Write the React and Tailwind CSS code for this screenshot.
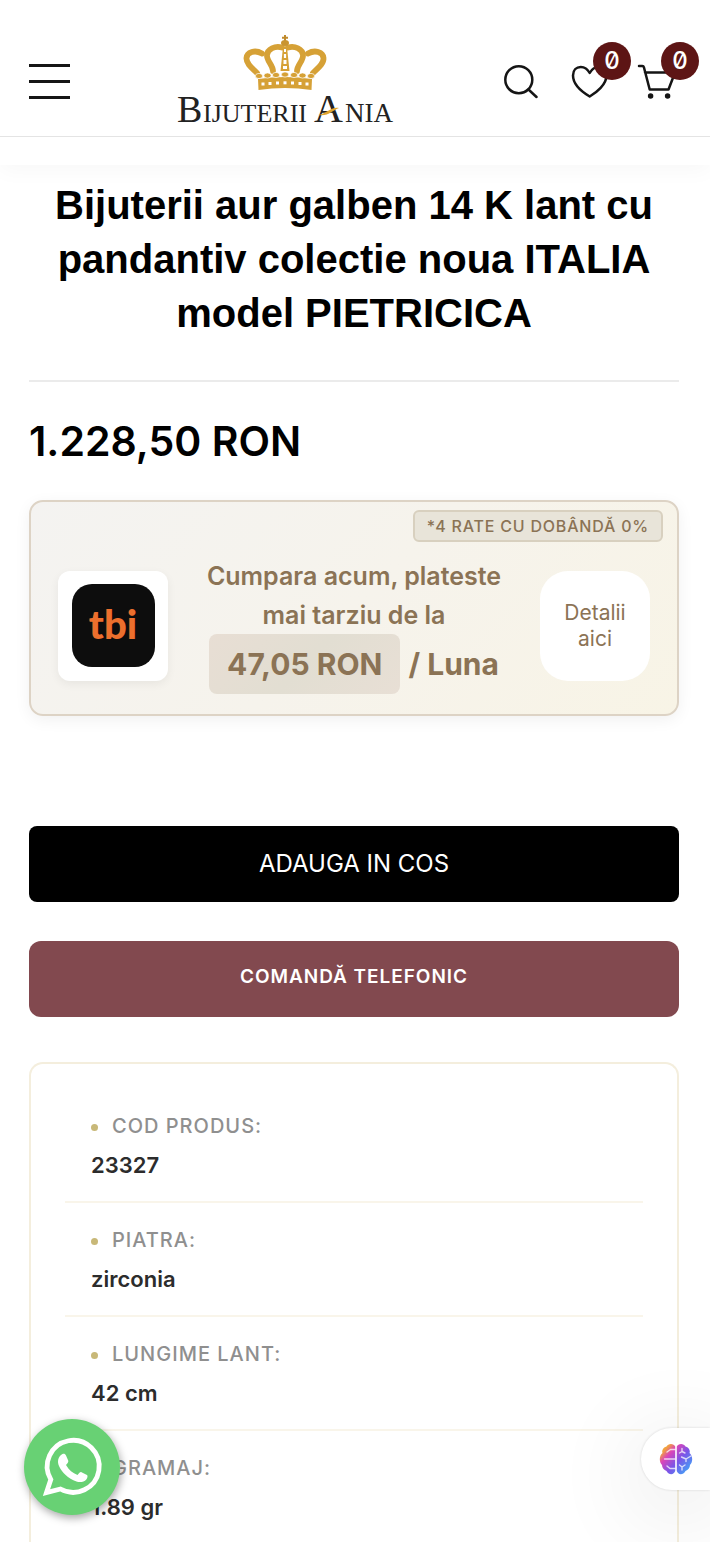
const details = [
  { label: "COD PRODUS:", value: "23327" },
  { label: "PIATRA:", value: "zirconia" },
  { label: "LUNGIME LANT:", value: "42 cm" },
  { label: "GRAMAJ:", value: "1.89 gr" },
]

export default function App() {
  return (
    <div className="flex min-h-screen flex-col bg-white font-['Inter',sans-serif] text-black">
      <Header />

      <main className="flex flex-1 flex-col pt-[13px] pr-[31px] pl-[29px]">
        <h1 className="text-center font-['Liberation_Sans',Arial,sans-serif] text-[40px] leading-[54px] font-bold">
          Bijuterii aur galben 14 K lant cu pandantiv colectie noua ITALIA model PIETRICICA
        </h1>
        <hr className="mt-10 border-t-2 border-[#ebebeb]" />
        <p className="mt-8 text-[41px] leading-[54px] font-semibold">1.228,50 RON</p>

        <Installments />

        <button
          type="button"
          className="mt-[110px] h-[76px] w-full rounded-lg bg-black text-2xl text-white"
        >
          ADAUGA IN COS
        </button>
        <button
          type="button"
          className="mt-[39px] h-[76px] w-full rounded-xl bg-[#82494f] pb-1 text-[19px] font-semibold tracking-wider text-white"
        >
          COMANDĂ TELEFONIC
        </button>

        {/* Product details */}
        <section className="mt-[45px] flex-1 rounded-t-[14px] border-2 border-b-0 border-[#f4eedd] px-[34px] pt-[25px]">
          <dl>
            {details.map((item) => (
              <DetailRow key={item.label} label={item.label} value={item.value} />
            ))}
          </dl>
        </section>
      </main>

      {/* Floating buttons */}
      <a
        href="#whatsapp"
        aria-label="WhatsApp"
        className="fixed bottom-[27px] left-6 flex size-24 items-center justify-center rounded-full bg-[#68d174] shadow-[1px_3px_8px_rgba(0,0,0,0.35)]"
      >
        <WhatsAppIcon />
      </a>
      <button
        type="button"
        aria-label="Asistent"
        className="fixed right-0 bottom-[52px] flex h-[62px] w-[69px] items-center rounded-l-full bg-white pl-[18px] shadow-[0_0_3px_rgba(0,0,0,0.15),0_16px_90px_10px_rgba(0,0,0,0.09)]"
      >
        <BrainIcon />
      </button>
    </div>
  )
}

// --- Components ---

function Header() {
  return (
    <header className="pb-7 shadow-[0_6px_20px_rgba(0,0,0,0.03)]">
      <div className="flex h-[137px] items-center justify-between border-b border-[#e4e4e4] pt-[27px] pr-9 pl-[29px]">
        <button type="button" aria-label="Meniu" className="flex flex-col gap-[13px]">
          <span className="h-[3px] w-[41px] bg-[#151515]" />
          <span className="h-[3px] w-[41px] bg-[#151515]" />
          <span className="h-[3px] w-[41px] bg-[#151515]" />
        </button>
        <a href="#home" aria-label="Bijuterii Ania">
          <Logo />
        </a>
        <nav className="flex gap-8">
          <a href="#cauta" aria-label="Cauta">
            <svg className="size-9" viewBox="0 0 36 36" fill="none" stroke="#151515" strokeWidth="2.5" strokeLinecap="round">
              <circle cx="16.800" cy="15.700" r="13.500" />
              <path d="M26.500 25.500l8 7.500" />
            </svg>
          </a>
          <a href="#favorite" aria-label="Favorite" className="relative">
            <svg className="size-9 overflow-visible" viewBox="0 0 36 36" fill="none" stroke="#151515" strokeWidth="2.5" strokeLinejoin="round">
              <path d="M19.700 32.500C13 28.500 3 20.500 3 11.500C3 6 6.500 3 10.800 3C15 3 17.500 5 19.700 9C21.900 5 24.500 3 28.600 3C33 3 36.500 6 36.500 11.500C36.500 20.500 26.500 28.500 19.700 32.500Z" />
            </svg>
            <CountBadge count={0} />
          </a>
          <a href="#cos" aria-label="Cos" className="relative">
            <svg className="size-9 overflow-visible" viewBox="0 0 36 36" fill="none" stroke="#151515" strokeWidth="2.5" strokeLinecap="round" strokeLinejoin="round">
              <path d="M1 2h3.300c1 0 1.400.500 1.600 1.300L11.700 25.500H30.500L37 8.500H7" />
              <circle cx="12.600" cy="32" r="1.500" fill="#151515" />
              <circle cx="29.600" cy="32" r="1.500" fill="#151515" />
            </svg>
            <CountBadge count={0} />
          </a>
        </nav>
      </div>
    </header>
  )
}

function CountBadge({ count }) {
  return (
    <span className="absolute -top-[22px] left-[23px] flex size-[38px] items-center justify-center rounded-full bg-[#5d1515] text-2xl leading-none font-medium text-white slashed-zero">
      {count}
    </span>
  )
}

function Installments() {
  return (
    <section className="relative mt-8 flex items-center justify-between rounded-[14px] border-2 border-[#ddd3c5] bg-linear-135 from-[#f4f3f1] via-[#f6f3ec] to-[#f8f4e6] px-[27px] pt-[55px] pb-5 text-[#8b7355] shadow-[0_4px_16px_rgba(0,0,0,0.06)]">
      <span className="absolute top-2 right-[14px] flex h-8 items-center rounded-md border-2 border-[#d8d0bf] bg-[#e8e4d9] px-3 text-[16px] font-medium tracking-wider">
        *4 RATE CU DOBÂNDĂ 0%
      </span>
      <div className="flex size-[110px] shrink-0 items-center justify-center rounded-xl bg-white shadow-[0_3px_10px_rgba(0,0,0,0.06)]">
        <svg className="size-[83px]" viewBox="0 0 83 83" role="img" aria-label="tbi">
          <rect width="83" height="83" rx="20" fill="#0d0d0d" />
          <text x="41" y="55" textAnchor="middle" fill="#ec6f2d" fontFamily="Lato, sans-serif" fontWeight="900" fontSize="40">
            tbi
          </text>
        </svg>
      </div>
      <div className="px-4 text-center">
        <p className="mx-auto max-w-[320px] text-[25px] leading-[39px] font-semibold">
          Cumpara acum, plateste mai tarziu de la
        </p>
        <p className="-mt-px flex items-center justify-center gap-2 text-[30px] leading-[60px] font-bold">
          <span className="rounded-lg bg-linear-135 from-[#e8ded4] via-[#e2ded2] to-[#e8dfd5] px-[18px]">47,05 RON</span>
          <span>/ Luna</span>
        </p>
      </div>
      <button
        type="button"
        className="size-[110px] shrink-0 rounded-[28px] bg-white px-5 text-[21px] leading-[26px]"
      >
        Detalii aici
      </button>
    </section>
  )
}

function DetailRow({ label, value }) {
  return (
    <div className="border-b-2 border-[#f9f5ea] px-[26px] pt-6 pb-5 last:border-b-0">
      <dt className="flex items-center gap-[14px] text-xl leading-[26px] font-medium tracking-wider text-[#8f8f8f]">
        <span className="mt-0.5 size-[7px] rounded-full bg-[#c8b878]" />
        {label}
      </dt>
      <dd className="mt-[10px] text-[22px] leading-8 font-semibold text-[#2c2c2c]">{value}</dd>
    </div>
  )
}

function Logo() {
  return (
    <svg className="h-[100px] w-[218px]" viewBox="0 -3 218 100" role="img" aria-label="Bijuterii Ania">
      {/* Crown */}
      <g transform="translate(108)">
        <g fill="none" stroke="#d6a136" strokeWidth="5.800" strokeLinecap="round">
          <path d="M-28 38C-32 34 -39 29 -38.500 23C-38 17 -30 14.500 -23 18.500" />
          <path d="M28 38C32 34 39 29 38.500 23C38 17 30 14.500 23 18.500" />
          <path d="M-12 36C-12 30 -18.500 26 -18 20C-17.500 14 -10 10.500 -3 12.500" />
          <path d="M12 36C12 30 18.500 26 18 20C17.500 14 10 10.500 3 12.500" />
        </g>
        <path d="M-2 12h4L4.500 36h-9z" fill="#d6a136" />
        <path d="M0 0v7M-3 2.800h6" stroke="#c08a2c" strokeWidth="2" />
        <ellipse cy="8" rx="4" ry="3" fill="#c9942f" />
        <g fill="#fff">
          <rect x="-1" y="14" width="2" height="3" />
          <rect x="-1.100" y="19" width="2.200" height="4" />
          <rect x="-1.500" y="25" width="3" height="4" />
          <rect x="-2" y="31" width="4" height="3" />
        </g>
        <path d="M-27 44Q0 40 27 44L26.500 55Q0 51 -26.500 55Z" fill="#d6a136" />
        <g fill="#d6a136" stroke="#fff" strokeWidth=".7">
          <ellipse cx="-26" cy="41" rx="3.600" ry="2.600" />
          <ellipse cx="-17.500" cy="40.500" rx="3.600" ry="2.600" />
          <ellipse cx="-9" cy="40" rx="3.600" ry="2.600" />
          <ellipse cx="0" cy="39.500" rx="3.600" ry="2.600" />
          <ellipse cx="9" cy="40" rx="3.600" ry="2.600" />
          <ellipse cx="17.500" cy="40.500" rx="3.600" ry="2.600" />
          <ellipse cx="26" cy="41" rx="3.600" ry="2.600" />
        </g>
        <g fill="#fff">
          <rect x="-23.500" y="47.500" width="3" height="3" />
          <rect x="-16.500" y="47" width="3" height="3" />
          <rect x="-9" y="46.500" width="3" height="3" />
          <rect x="-1.500" y="46.300" width="3" height="3" />
          <rect x="6" y="46.500" width="3" height="3" />
          <rect x="13.500" y="47" width="3" height="3" />
          <rect x="20.500" y="47.500" width="3" height="3" />
        </g>
      </g>
      <g fill="#222" fontFamily="'Liberation Serif', serif">
        <text x="0" y="87" fontSize="38">B</text>
        <text x="26" y="87" fontSize="26">IJUTERII</text>
        <text x="137" y="87" fontSize="40">A</text>
        <text x="168" y="87" fontSize="27">NIA</text>
      </g>
      <path d="M141 80C149 79 155 71 162 73C156 75 151 82 141 80Z" fill="#e0a42e" />
    </svg>
  )
}

function WhatsAppIcon() {
  return (
    <svg className="size-[58px] overflow-visible" viewBox="0 0 58 58" fill="none">
      <path
        d="M3.500 54.500L7.800 41.500A26 26 0 1 1 17.500 51Z"
        stroke="#fff"
        strokeWidth="4.800"
      />
      <path
        d="M19.500 16C21 15.500 22.300 15.800 23 17.500L25.200 22.500C25.600 23.500 25.200 24.500 23 27C26 32 29.500 35 34.500 37C36.500 34.500 37.300 33.700 38.500 34.200L44 37C45 37.600 44.500 40 43.300 41.500C41 44 37 44.800 33.500 43.500C25 40.500 19 34.500 16 28C14 23.500 15 18.500 19.500 16Z"
        fill="#fff"
      />
    </svg>
  )
}

function BrainIcon() {
  return (
    <svg className="h-8 w-[34px]" viewBox="0 0 34 32" fill="none">
      <defs>
        <linearGradient id="brain" x1="3" y1="3" x2="31" y2="29" gradientUnits="userSpaceOnUse">
          <stop offset="0" stopColor="#f5a83c" />
          <stop offset=".12" stopColor="#f0a040" />
          <stop offset=".28" stopColor="#dc45b8" />
          <stop offset=".58" stopColor="#7a55e8" />
          <stop offset="1" stopColor="#3eaaf8" />
        </linearGradient>
      </defs>
      <path d="M16.200 3.500C15 0 9 0 7.500 3.500C4 4.500 2.500 7.500 3.500 10C0 13 0 19 3 22C3 25 5 27 7.500 28C10 32.500 15 32 16.200 28Z" fill="url(#brain)" />
      <path d="M17.800 3.500C19 0 25 0 26.500 3.500C30 4.500 31.500 7.500 30.500 10C34 13 34 19 31 22C31 25 29 27 26.500 28C24 32.500 19 32 17.800 28Z" fill="url(#brain)" />
      <g stroke="#fff" strokeOpacity=".75" strokeWidth="1.400" strokeLinecap="round" strokeLinejoin="round">
        <path d="M16 6.500H11.500L8 9M16 16H5.500M16 25.500H11L8 23M23 5.500V8.500L20.500 10M23 8.500L26 10M23 27V24L20.500 22M23 24L26 22M22.500 14L27 16L32 13M27 16V18.500" />
      </g>
    </svg>
  )
}
